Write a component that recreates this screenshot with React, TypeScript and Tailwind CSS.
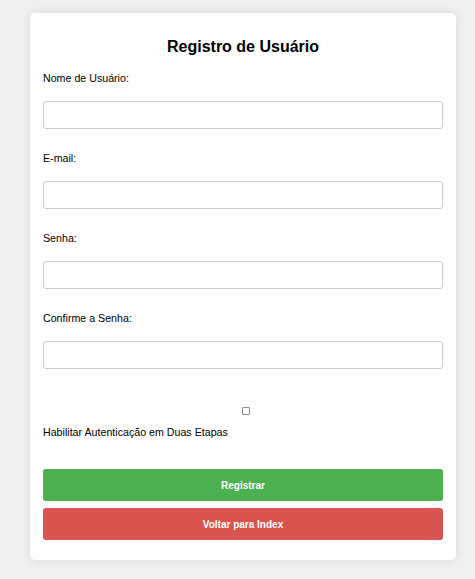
import React from "react";

const fields = [
  { label: "Nome de Usuário:", type: "text" },
  { label: "E-mail:", type: "email" },
  { label: "Senha:", type: "password" },
  { label: "Confirme a Senha:", type: "password" },
];

export default function App() {
  return (
    <div className="min-h-[579px] bg-[#f0f0f0] pt-[13px] pb-[19px] font-['Liberation_Sans',Arial,sans-serif] text-black">
      <div className="ml-[30px] w-[426px] rounded-[5px] bg-white px-[13px] pt-[25px] pb-[20px] shadow-[0_0_10px_rgba(0,0,0,0.1)]">
        <h2 className="text-center text-[16px] font-bold leading-[18px]">Registro de Usuário</h2>

        <form className="flex flex-col" onSubmit={(e) => e.preventDefault()}>
          {fields.map((f, i) => (
            <div key={i} className={i === 0 ? "mt-[16px]" : "mt-[23px]"}>
              <label className="block text-[10.67px] leading-[12px]">{f.label}</label>
              <input
                type={f.type}
                className="mt-[17px] block h-[28px] w-full rounded-[3px] border border-[#ccc] bg-white px-[8px] text-[10.67px] outline-none"
              />
            </div>
          ))}

          {/* checkbox is tiny and centred in the reference */}
          <div className="mt-[38px] flex justify-center pl-[6px]">
            <input
              type="checkbox"
              className="m-0 block h-[8px] w-[8px] appearance-none rounded-[1px] border border-[#8f8f8f] bg-white"
            />
          </div>
          <label className="mt-[11px] block text-[10.67px] leading-[12px]">
            Habilitar Autenticação em Duas Etapas
          </label>

          <button
            type="submit"
            className="mt-[31px] h-[32px] w-full rounded-[3px] bg-[#4caf50] text-[10px] font-bold text-white"
          >
            Registrar
          </button>
          <button
            type="button"
            className="mt-[7px] h-[32px] w-full rounded-[3px] bg-[#d9534f] text-[10px] font-bold text-white"
          >
            Voltar para Index
          </button>
        </form>
      </div>
    </div>
  );
}
